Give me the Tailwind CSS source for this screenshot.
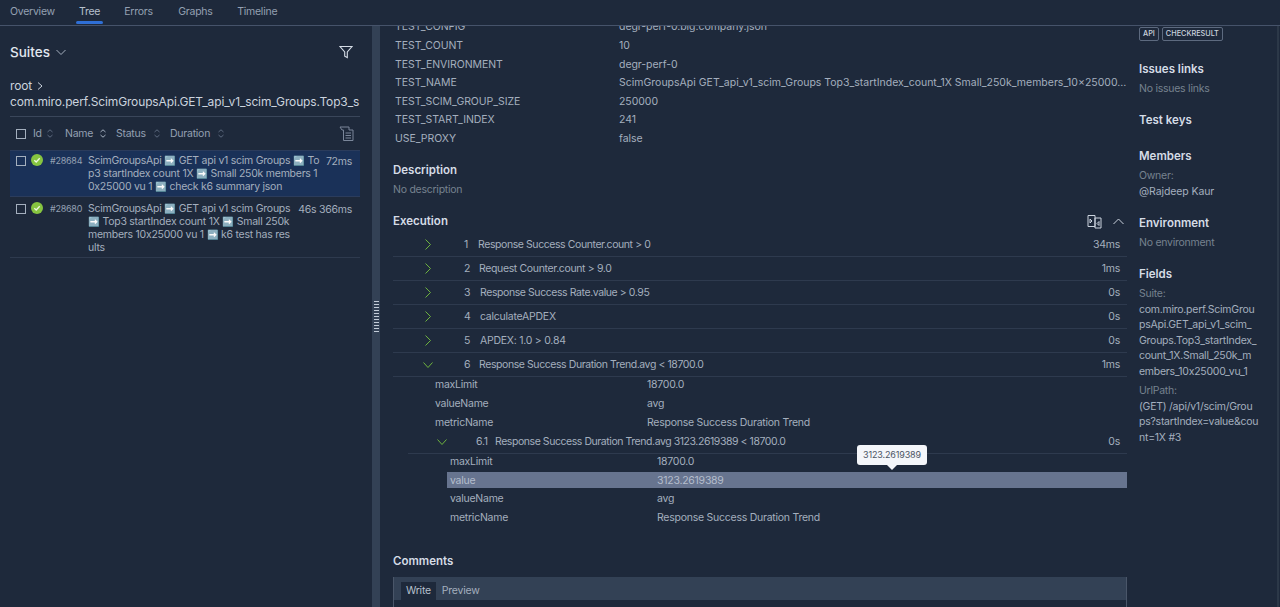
<!DOCTYPE html>
<html lang="en">
  <head>
    <meta charset="UTF-8" />
    <title>Test run</title>
    <script src="https://cdn.jsdelivr.net/npm/@tailwindcss/browser@4"></script>
  </head>

  <body class="h-[607px] w-[1280px] overflow-hidden bg-[#1e293b] font-['Inter',sans-serif] text-[10.500px] tracking-[-0.25px] text-[#a4afbe]">
    <!-- Tabs -->
    <nav class="flex h-[26px] gap-[24px] border-b border-[#46536a] pl-[10px] leading-[24px] text-[#94a0b2]">
      <span class="w-[45px]">Overview</span>
      <span class="relative text-[#b6c0cd]">Tree<i class="absolute -left-[3px] -right-[3px] top-[21px] h-[3px] rounded-sm bg-[#2f6fd6]"></i></span>
      <span class="w-[30px]">Errors</span>
      <span class="w-[35px]">Graphs</span>
      <span>Timeline</span>
    </nav>

    <div class="flex h-[581px]">
      <!-- Left panel -->
      <aside class="w-[372px] shrink-0 overflow-hidden pl-[10px] pr-[12px]">
        <div class="flex h-[52px] items-center justify-between pr-[7px]">
          <div class="flex items-center gap-[6px] text-[13.500px] font-medium tracking-normal text-[#e2e8f0]">
            Suites
            <svg class="h-[10px] w-[10px]" viewBox="0 0 10 10" fill="none" stroke="#a4afbe" stroke-width="1"><path d="M0.5 3l4.5 4.500L9.5 3" /></svg>
          </div>
          <svg class="h-[14px] w-[14px]" viewBox="0 0 14 14" fill="none" stroke="#d5dce6" stroke-width="1.100"><path d="M1 1.500h12L8.300 7v5.500l-2.600-1.300V7z" /></svg>
        </div>
        <div class="h-[39px] overflow-hidden border-b border-[#3a465a] text-[12px] leading-[15.500px] tracking-[-0.14px] text-[#cbd3de]">
          <div class="flex items-center gap-[5px]">root
            <svg class="h-[8px] w-[6px]" viewBox="0 0 6 8" fill="none" stroke="#cbd3de"><path d="M1 .5L5 4 1 7.500" /></svg>
          </div>
          <div class="whitespace-nowrap">com.miro.perf.ScimGroupsApi.GET_api_v1_scim_Groups.Top3_s</div>
        </div>
        <div class="flex h-[33px] items-center pl-[6px] text-[#94a0b2]">
          <i class="h-[10px] w-[10px] border border-[#a4afbe]"></i>
          <span class="ml-[7px] w-[14px]">Id</span>
          <svg class="h-[9px] w-[6px]" viewBox="0 0 6 9" fill="none" stroke="#5d6a7f"><path d="M.5 3L3 .8 5.500 3M.5 6L3 8.200 5.500 6" /></svg>
          <span class="ml-[12px] w-[35px]">Name</span>
          <svg class="h-[9px] w-[6px]" viewBox="0 0 6 9" fill="none" stroke="#a4afbe"><path d="M.5 3L3 .8 5.500 3M.5 6L3 8.200 5.500 6" /></svg>
          <span class="ml-[10px] w-[38px]">Status</span>
          <svg class="h-[9px] w-[6px]" viewBox="0 0 6 9" fill="none" stroke="#5d6a7f"><path d="M.5 3L3 .8 5.500 3M.5 6L3 8.200 5.500 6" /></svg>
          <span class="ml-[10px] w-[48px]">Duration</span>
          <svg class="h-[9px] w-[6px]" viewBox="0 0 6 9" fill="none" stroke="#5d6a7f"><path d="M.5 3L3 .8 5.500 3M.5 6L3 8.200 5.500 6" /></svg>
          <svg class="ml-auto mr-[6px] h-[15px] w-[15px]" viewBox="0 0 15 15" fill="none" stroke="#7a869a"><path d="M1 1h9v3h4v10.500H4.500V4H3L1 1zM6.500 7h5.500M6.500 9.500h5.500M6.500 12h5.500" /></svg>
        </div>

        <!-- Test rows -->
        <div class="flex h-[47px] border-y border-[#2b3c5c] bg-[#1a3158] pl-[6px] pt-[3px] leading-[13px]">
          <i class="mt-[2px] h-[10px] w-[10px] shrink-0 border border-[#a4afbe]"></i>
          <svg class="ml-[5px] h-[12px] w-[12px] shrink-0" viewBox="0 0 12 12"><circle cx="6" cy="6" r="6" fill="#86c440" /><path d="M3.300 6.200l1.900 1.800 3.500-3.700" fill="none" stroke="#eef7e2" stroke-width="1.300" /></svg>
          <span class="ml-[7px] w-[38px] shrink-0 text-[9px] text-[#94a0b2]">#28684</span>
          <p class="shrink-0 whitespace-nowrap">ScimGroupsApi <span class="text-[9.500px] leading-[0]">➡️</span> GET api v1 scim Groups <span class="text-[9.500px] leading-[0]">➡️</span> To<br />p3 startIndex count 1X <span class="text-[9.500px] leading-[0]">➡️</span> Small 250k members 1<br />0x25000 vu 1 <span class="text-[9.500px] leading-[0]">➡️</span> check k6 summary json</p>
          <span class="ml-auto mr-[8px] mt-[1px]">72ms</span>
        </div>
        <div class="flex h-[61px] border-b border-[#2e3a4e] pl-[6px] pt-[5px] leading-[13px]">
          <i class="mt-[2px] h-[10px] w-[10px] shrink-0 border border-[#a4afbe]"></i>
          <svg class="ml-[5px] h-[12px] w-[12px] shrink-0" viewBox="0 0 12 12"><circle cx="6" cy="6" r="6" fill="#86c440" /><path d="M3.300 6.200l1.900 1.800 3.500-3.700" fill="none" stroke="#eef7e2" stroke-width="1.300" /></svg>
          <span class="ml-[7px] w-[38px] shrink-0 text-[9px] text-[#94a0b2]">#28680</span>
          <p class="shrink-0 whitespace-nowrap">ScimGroupsApi <span class="text-[9.500px] leading-[0]">➡️</span> GET api v1 scim Groups<br /><span class="text-[9.500px] leading-[0]">➡️</span> Top3 startIndex count 1X <span class="text-[9.500px] leading-[0]">➡️</span> Small 250k<br />members 10x25000 vu 1 <span class="text-[9.500px] leading-[0]">➡️</span> k6 test has res<br />ults</p>
          <span class="ml-auto mr-[8px] mt-[1px] whitespace-nowrap">46s 366ms</span>
        </div>
      </aside>

      <!-- Splitter -->
      <div class="flex w-[8px] shrink-0 items-center justify-center bg-[#334155]">
        <i class="h-[31px] w-[5px] bg-[repeating-linear-gradient(#c3ccd8_0_1px,transparent_1px_3px)]"></i>
      </div>

      <!-- Middle panel -->
      <main class="w-[747px] shrink-0 overflow-hidden pl-[13px]">
        <div class="-mt-[8px] pl-[2px] tracking-[-0.05px]">
          <div class="flex h-[18.600px] items-center"><span class="w-[224px] shrink-0">TEST_CONFIG</span><span>degr-perf-0.big.company.json</span></div>
          <div class="flex h-[18.600px] items-center"><span class="w-[224px] shrink-0">TEST_COUNT</span><span>10</span></div>
          <div class="flex h-[18.600px] items-center"><span class="w-[224px] shrink-0">TEST_ENVIRONMENT</span><span>degr-perf-0</span></div>
          <div class="flex h-[18.600px] items-center"><span class="w-[224px] shrink-0">TEST_NAME</span><span class="whitespace-nowrap tracking-normal">ScimGroupsApi GET_api_v1_scim_Groups Top3_startIndex_count_1X Small_250k_members_10x25000...</span></div>
          <div class="flex h-[18.600px] items-center"><span class="w-[224px] shrink-0">TEST_SCIM_GROUP_SIZE</span><span>250000</span></div>
          <div class="flex h-[18.600px] items-center"><span class="w-[224px] shrink-0">TEST_START_INDEX</span><span>241</span></div>
          <div class="flex h-[18.600px] items-center"><span class="w-[224px] shrink-0">USE_PROXY</span><span>false</span></div>
        </div>

        <h3 class="mt-[14px] text-[11.500px] font-semibold leading-[16px] tracking-normal text-[#d5dce6]">Description</h3>
        <p class="mt-[5px] leading-[14px] text-[#76828f]">No description</p>

        <div class="mt-[14px] flex h-[20px] items-center justify-between pr-[3px]">
          <h3 class="text-[11.500px] font-semibold tracking-normal text-[#d5dce6]">Execution</h3>
          <div class="flex items-center gap-[11px]">
            <svg class="h-[15px] w-[15px]" viewBox="0 0 15 15" fill="none" stroke="#cbd3de"><path d="M1 1.500h7v11H1zM8 4h6v10H8zM3 5l2 2-2 2zM12 7.500l-2 2 2 2z" /></svg>
            <svg class="h-[7px] w-[11px]" viewBox="0 0 11 7" fill="none" stroke="#cbd3de"><path d="M.5 6L5.500 1l5 5" /></svg>
          </div>
        </div>

        <!-- Execution rows -->
        <div class="w-[734px]">
          <div class="mt-[2px] flex h-[24px] items-center border-b border-[#2e3a4e]"><svg class="ml-[32px] h-[11px] w-[6px]" viewBox="0 0 6 11" fill="none" stroke="#6db33f"><path d="M.5.5L5.500 5.500 .5 10.500" /></svg><span class="ml-[33px] w-[14px]">1</span><span class="tracking-[-0.42px]">Response Success Counter.count &gt; 0</span><span class="ml-auto mr-[7px]">34ms</span></div>
          <div class="flex h-[24px] items-center border-b border-[#2e3a4e]"><svg class="ml-[32px] h-[11px] w-[6px]" viewBox="0 0 6 11" fill="none" stroke="#6db33f"><path d="M.5.5L5.500 5.500 .5 10.500" /></svg><span class="ml-[33px] w-[15px]">2</span><span class="tracking-[-0.36px]">Request Counter.count &gt; 9.0</span><span class="ml-auto mr-[7px]">1ms</span></div>
          <div class="flex h-[24px] items-center border-b border-[#2e3a4e]"><svg class="ml-[32px] h-[11px] w-[6px]" viewBox="0 0 6 11" fill="none" stroke="#6db33f"><path d="M.5.5L5.500 5.500 .5 10.500" /></svg><span class="ml-[33px] w-[16px]">3</span><span class="tracking-[-0.42px]">Response Success Rate.value &gt; 0.95</span><span class="ml-auto mr-[7px]">0s</span></div>
          <div class="flex h-[24px] items-center border-b border-[#2e3a4e]"><svg class="ml-[32px] h-[11px] w-[6px]" viewBox="0 0 6 11" fill="none" stroke="#6db33f"><path d="M.5.5L5.500 5.500 .5 10.500" /></svg><span class="ml-[33px] w-[16px]">4</span><span>calculateAPDEX</span><span class="ml-auto mr-[7px]">0s</span></div>
          <div class="flex h-[24px] items-center border-b border-[#2e3a4e]"><svg class="ml-[32px] h-[11px] w-[6px]" viewBox="0 0 6 11" fill="none" stroke="#6db33f"><path d="M.5.5L5.500 5.500 .5 10.500" /></svg><span class="ml-[33px] w-[16px]">5</span><span>APDEX: 1.0 &gt; 0.84</span><span class="ml-auto mr-[7px]">0s</span></div>
          <div class="flex h-[24px] items-center border-b border-[#2e3a4e]"><svg class="ml-[30px] h-[6px] w-[10px]" viewBox="0 0 10 6" fill="none" stroke="#6db33f"><path d="M.5.5L5 5.500 9.500.5" /></svg><span class="ml-[31px] w-[15px]">6</span><span class="tracking-[-0.42px]">Response Success Duration Trend.avg &lt; 18700.0</span><span class="ml-auto mr-[7px]">1ms</span></div>

          <div class="-mt-[2px] pl-[42px]">
            <div class="flex h-[19px] items-center"><span class="w-[212px]">maxLimit</span><span>18700.0</span></div>
            <div class="flex h-[19px] items-center"><span class="w-[212px]">valueName</span><span>avg</span></div>
            <div class="flex h-[19px] items-center"><span class="w-[212px]">metricName</span><span>Response Success Duration Trend</span></div>
          </div>

          <div class="ml-[15px] flex h-[21.800px] items-center border-b border-[#2e3a4e] pb-[2px]"><svg class="ml-[29px] h-[6px] w-[10px]" viewBox="0 0 10 6" fill="none" stroke="#6db33f"><path d="M.5.5L5 5.500 9.500.5" /></svg><span class="ml-[29px] w-[19px]">6.1</span><span class="tracking-[-0.44px]">Response Success Duration Trend.avg 3123.2619389 &lt; 18700.0</span><span class="ml-auto mr-[7px]">0s</span></div>

          <div class="relative ml-[54px] -mt-[1px]">
            <div class="flex h-[18.600px] items-center pl-[3px]"><span class="w-[207px]">maxLimit</span><span>18700.0</span></div>
            <div class="mt-[0.400px] flex h-[16px] items-center bg-[#67748f] pl-[3px] pt-[1px] text-[#b4bdcc]"><span class="w-[207px]">value</span><span>3123.2619389</span></div>
            <div class="mt-[2px] flex h-[18.600px] items-center pl-[3px]"><span class="w-[207px]">valueName</span><span>avg</span></div>
            <div class="flex h-[18.600px] items-center pl-[3px]"><span class="w-[207px]">metricName</span><span>Response Success Duration Trend</span></div>

            <!-- Tooltip -->
            <div class="absolute left-[410px] -top-[8px] w-[70px] rounded-[3px] bg-[#f4f6fa] py-[3px] text-center text-[9px] leading-[14px] tracking-[-0.15px] text-[#4b5565]">
              3123.2619389
              <i class="absolute bottom-[-5px] left-[30px] h-0 w-0 border-x-[5px] border-t-[5px] border-x-transparent border-t-[#f4f6fa]"></i>
            </div>
          </div>
        </div>

        <h3 class="mt-[26px] text-[11.500px] font-semibold leading-[16px] tracking-normal text-[#d5dce6]">Comments</h3>
        <div class="mt-[8px] w-[734px] border-x border-[#4a5669]">
          <div class="flex h-[23px] items-end bg-[#334155] pl-[7px]">
            <span class="flex h-[18px] items-center bg-[#1e293b] px-[5px] pb-[1px] text-[#b6c0cd]">Write</span>
            <span class="flex h-[18px] items-center px-[6px] pb-[1px]">Preview</span>
          </div>
          <div class="h-[10px]"></div>
        </div>
      </main>

      <!-- Right panel -->
      <aside class="w-[150px] shrink-0 pl-[12px]">
        <div class="mt-[1px] flex gap-[3px] tracking-normal">
          <span class="flex h-[14px] items-center rounded-[2px] border border-[#5d6a7f] px-[3px] text-[7.300px] font-medium text-[#cbd3de]">API</span>
          <span class="flex h-[14px] items-center rounded-[2px] border border-[#5d6a7f] px-[3px] text-[7.300px] font-medium text-[#cbd3de]">CHECKRESULT</span>
        </div>
        <h3 class="mt-[20px] text-[11.500px] font-semibold leading-[16px] tracking-normal text-[#d5dce6]">Issues links</h3>
        <p class="mt-[5px] leading-[14px] text-[#76828f]">No issues links</p>
        <h3 class="mt-[16px] text-[11.500px] font-semibold leading-[16px] tracking-normal text-[#d5dce6]">Test keys</h3>
        <h3 class="mt-[20px] text-[11.500px] font-semibold leading-[16px] tracking-normal text-[#d5dce6]">Members</h3>
        <p class="mt-[4px] leading-[15.500px] text-[#76828f]">Owner:</p>
        <p class="leading-[15.500px] tracking-[-0.1px]">@Rajdeep Kaur</p>
        <h3 class="mt-[16px] text-[11.500px] font-semibold leading-[16px] tracking-normal text-[#d5dce6]">Environment</h3>
        <p class="mt-[5px] leading-[14px] text-[#76828f]">No environment</p>
        <h3 class="mt-[16px] text-[11.500px] font-semibold leading-[16px] tracking-normal text-[#d5dce6]">Fields</h3>
        <p class="mt-[4px] leading-[15.500px] text-[#76828f]">Suite:</p>
        <p class="whitespace-nowrap leading-[15.500px]">com.miro.perf.ScimGrou<br />psApi.GET_api_v1_scim_<br />Groups.Top3_startIndex_<br />count_1X.Small_250k_m<br />embers_10x25000_vu_1</p>
        <p class="mt-[4px] leading-[15.500px] text-[#76828f]">UrlPath:</p>
        <p class="whitespace-nowrap leading-[15.500px]">(GET) /api/v1/scim/Grou<br />ps?startIndex=value&amp;cou<br />nt=1X #3</p>
      </aside>
      <div class="flex-1 border-l-2 border-[#2c3848]"></div>
    </div>
  </body>
</html>
